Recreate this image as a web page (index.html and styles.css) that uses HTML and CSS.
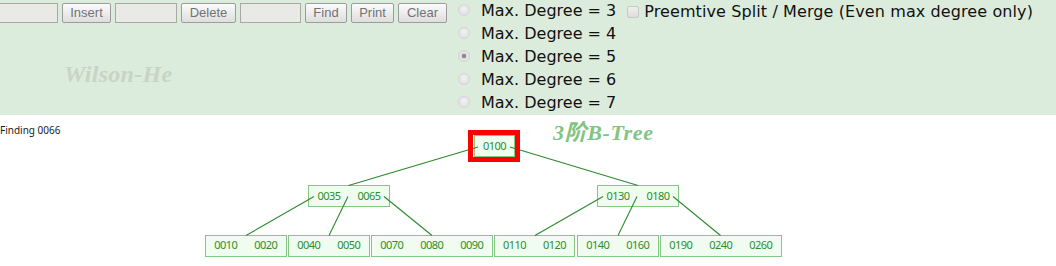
FILE: index.html
```html
<!DOCTYPE html>
<html>
<head>
<meta charset="utf-8">
<link rel="stylesheet" href="styles.css">
</head>
<body>
<div class="panel">
  <div class="left">
    <div class="controls">
      <input class="field f1" type="text">
      <button class="btn b-insert">Insert</button>
      <input class="field" type="text">
      <button class="btn b-delete">Delete</button>
      <input class="field f3" type="text">
      <button class="btn b-find">Find</button>
      <button class="btn b-print">Print</button>
      <button class="btn b-clear">Clear</button>
    </div>
    <div class="sig">Wilson-He</div>
  </div>
  <div class="degrees">
    <label class="opt"><input type="radio" name="deg"><span>Max. Degree = 3</span></label>
    <label class="opt"><input type="radio" name="deg"><span>Max. Degree = 4</span></label>
    <label class="opt"><input type="radio" name="deg" checked><span>Max. Degree = 5</span></label>
    <label class="opt"><input type="radio" name="deg"><span>Max. Degree = 6</span></label>
    <label class="opt"><input type="radio" name="deg"><span>Max. Degree = 7</span></label>
  </div>
  <label class="preempt"><input type="checkbox"><span>Preemtive Split / Merge (Even max degree only)</span></label>
</div>
<div class="canvas">
  <svg class="tree" width="1056" height="151" viewBox="0 115 1056 151" xmlns="http://www.w3.org/2000/svg">
    <text class="status" x="0" y="134">Finding 0066</text>
    <text class="title" x="553" y="140">3阶B-Tree</text>

    <g class="nodes">
      <rect x="474.5" y="135.5" width="40" height="21"/>
      <rect x="308.5" y="185.5" width="81" height="21"/>
      <rect x="597.5" y="185.5" width="81" height="21"/>
      <rect x="205.5" y="235.5" width="81" height="21"/>
      <rect x="288.5" y="235.5" width="81" height="21"/>
      <rect x="371.5" y="235.5" width="121" height="21"/>
      <rect x="494.5" y="235.5" width="80" height="21"/>
      <rect x="577.5" y="235.5" width="81" height="21"/>
      <rect x="660.5" y="235.5" width="121" height="21"/>
    </g>

    <g class="edges">
      <line x1="478" y1="147" x2="348.5" y2="185.5"/>
      <line x1="510" y1="147" x2="638" y2="185.5"/>
      <line x1="314" y1="196.5" x2="246" y2="235.5"/>
      <line x1="348" y1="196.5" x2="329" y2="235.5"/>
      <line x1="384" y1="196.5" x2="432" y2="235.5"/>
      <line x1="603" y1="196.5" x2="535" y2="235.5"/>
      <line x1="637" y1="196.5" x2="618" y2="235.5"/>
      <line x1="673" y1="196.5" x2="720.5" y2="235.5"/>
    </g>

    <rect class="highlight" x="470.5" y="132.5" width="47" height="27"/>

    <g class="keys">
      <text x="494.5" y="149.5">0100</text>
      <text x="329" y="199.5">0035</text>
      <text x="369" y="199.5">0065</text>
      <text x="618" y="199.5">0130</text>
      <text x="658" y="199.5">0180</text>
      <text x="225.8" y="249.3">0010</text>
      <text x="265.8" y="249.3">0020</text>
      <text x="308.8" y="249.3">0040</text>
      <text x="348.8" y="249.3">0050</text>
      <text x="391.8" y="249.3">0070</text>
      <text x="431.8" y="249.3">0080</text>
      <text x="471.8" y="249.3">0090</text>
      <text x="514.5" y="249.3">0110</text>
      <text x="554.5" y="249.3">0120</text>
      <text x="597.8" y="249.3">0140</text>
      <text x="637.8" y="249.3">0160</text>
      <text x="680.8" y="249.3">0190</text>
      <text x="720.8" y="249.3">0240</text>
      <text x="760.8" y="249.3">0260</text>
    </g>
  </svg>
</div>
</body>
</html>
```

FILE: styles.css
```css
html, body {
  margin: 0;
  padding: 0;
  background: #ffffff;
  overflow: hidden;
}

.panel {
  height: 115px;
  background: #dcecdc;
  display: flex;
  align-items: flex-start;
}

.left {
  width: 458px;
  flex: none;
}

.controls {
  display: flex;
  gap: 4px;
  margin-left: -4px;
  margin-top: 3px;
  height: 20px;
}

.field {
  box-sizing: border-box;
  width: 62px;
  height: 20px;
  margin: 0;
  padding: 0 2px;
  border: 1px solid #a8a8a4;
  background: #e9eae5;
  flex: none;
}

.f3 { width: 61px; }

.btn {
  box-sizing: border-box;
  height: 20px;
  margin: 0;
  padding: 0;
  border: 1px solid #9c9c9c;
  border-radius: 2px;
  background: linear-gradient(#fbfbfb, #dedede);
  font-family: "Liberation Sans", Arial, sans-serif;
  font-size: 13px;
  color: #727272;
  line-height: 18px;
  text-align: center;
  flex: none;
}

.b-insert { width: 49px; }
.b-delete { width: 55px; }
.b-find { width: 42px; }
.b-print { width: 43px; }
.b-clear { width: 49px; }

.sig {
  margin-left: 64px;
  margin-top: 37px;
  font-family: "Liberation Serif", "Times New Roman", serif;
  font-style: italic;
  font-weight: bold;
  font-size: 24px;
  letter-spacing: 0.3px;
  line-height: 28px;
  color: #c6d5c4;
}

.degrees {
  display: flex;
  flex-direction: column;
  margin-top: -1.5px;
  flex: none;
}

.opt, .preempt {
  display: flex;
  align-items: center;
  font-family: "DejaVu Sans", Verdana, sans-serif;
  font-size: 16px;
  line-height: 23px;
  color: #111;
  height: 23px;
}

.opt input {
  appearance: none;
  -webkit-appearance: none;
  box-sizing: border-box;
  width: 12px;
  height: 12px;
  margin: 0 11px 0 0;
  border: 1px solid #d2d6d2;
  border-radius: 50%;
  background: radial-gradient(circle at 50% 40%, #f2f2f2, #dcdcdc);
}

.opt input:checked {
  background: radial-gradient(circle, #8a8a8a 0, #8a8a8a 2px, #e4e4e4 2.6px, #dcdcdc 100%);
}

.preempt {
  margin-left: 11px;
  letter-spacing: 0.1px;
}

.preempt input {
  appearance: none;
  -webkit-appearance: none;
  box-sizing: border-box;
  width: 12px;
  height: 12px;
  margin: 0 5px 0 0;
  border: 1px solid #c6c9c6;
  border-radius: 2px;
  background: linear-gradient(#efefef, #dcdcdc);
}

.canvas {
  height: 151px;
  background: #ffffff;
}

.tree {
  display: block;
}

.status {
  font-family: "Noto Sans", "Open Sans", sans-serif;
  font-size: 10px;
  fill: #1a1a1a;
}

.title {
  font-family: "Liberation Serif", "Noto Sans CJK SC", serif;
  font-style: italic;
  font-weight: bold;
  font-size: 22px;
  letter-spacing: 0.6px;
  fill: #82c482;
}

.nodes rect {
  fill: #effcef;
  stroke: #84c884;
  stroke-width: 1;
}

.edges line {
  stroke: #2a8a2a;
  stroke-width: 1.1;
}

.highlight {
  fill: none;
  stroke: #ff0000;
  stroke-width: 5;
}

.keys text {
  font-family: "Noto Sans", "Open Sans", sans-serif;
  font-size: 11px;
  letter-spacing: -0.5px;
  fill: #2a8f2a;
  text-anchor: middle;
}
```
